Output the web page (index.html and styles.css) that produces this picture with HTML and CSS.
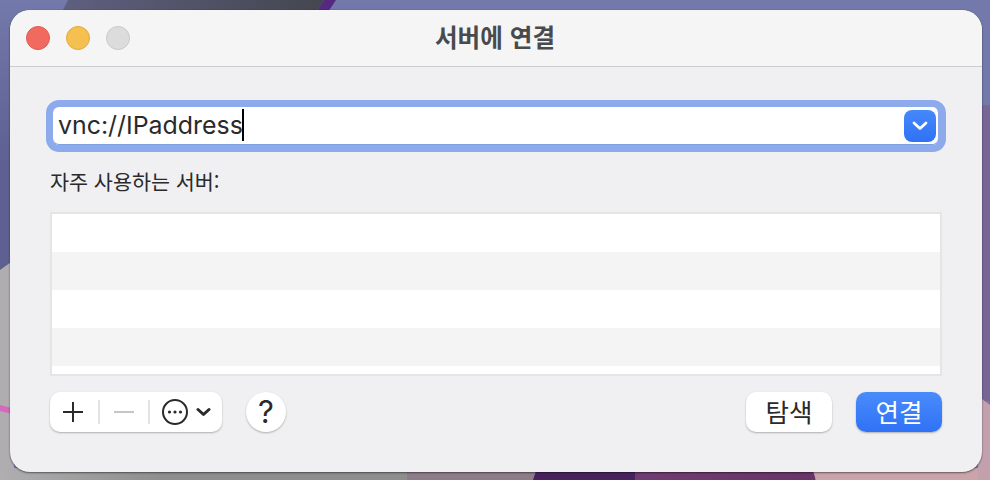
FILE: index.html
```html
<!DOCTYPE html>
<html lang="ko">
<head>
<meta charset="utf-8">
<title>서버에 연결</title>
<link rel="stylesheet" href="styles.css">
</head>
<body>
<svg class="wallpaper" viewBox="0 0 990 480" aria-hidden="true">
  <defs>
    <linearGradient id="blue" x1="0" y1="0" x2="0" y2="1"><stop offset="0" stop-color="#7379aa"/><stop offset="0.55" stop-color="#5d6090"/></linearGradient>
    <linearGradient id="dark" x1="0" y1="0" x2="1" y2="0"><stop offset="0" stop-color="#5f5f80"/><stop offset="1" stop-color="#44464f"/></linearGradient>
    <linearGradient id="gray" x1="0" y1="0" x2="1" y2="0"><stop offset="0" stop-color="#b0aeb0"/><stop offset="0.4" stop-color="#8e8e8e"/></linearGradient>
    <linearGradient id="plum" x1="0" y1="0" x2="1" y2="0"><stop offset="0" stop-color="#6f3d72"/><stop offset="1" stop-color="#6a3568"/></linearGradient>
  </defs>
  <rect width="990" height="480" fill="#7379aa"/>
  <rect width="400" height="300" fill="url(#blue)"/>
  <polygon points="400,0 990,0 990,105 400,105" fill="#7379aa"/>
  <polygon points="68,0 324,0 316,12 62,12" fill="url(#dark)"/>
  <polygon points="324,0 336,0 328,12 316,12" fill="#54297f"/>
  <polygon points="0,270 14,260 14,480 0,480" fill="#afadaf"/>
  <polygon points="0,405 12,408 12,414 0,411" fill="#d668bd"/>
  <rect x="0" y="468" width="410" height="12" fill="url(#gray)"/>
  <rect x="407" y="468" width="128" height="12" fill="#8d7d88"/>
  <polygon points="537,468 640,468 640,480 533,480" fill="#47225f"/>
  <rect x="635" y="468" width="180" height="12" fill="url(#plum)"/>
  <polygon points="812,468 990,468 990,480 816,480" fill="#c9a5ab"/>
  <rect x="978" y="105" width="12" height="296" fill="#786796"/>
  <polygon points="978,396 990,405 990,480 978,480" fill="#c2a1ad"/>
</svg>
<main class="window">
  <header class="titlebar">
    <div class="lights">
      <span class="light light-close"></span>
      <span class="light light-min"></span>
      <span class="light light-zoom"></span>
    </div>
    <h1 class="title">서버에 연결</h1>
  </header>
  <section class="content">
    <div class="field">
      <div class="field-text">vnc://IPaddress<span class="caret"></span></div>
      <button class="combo">
        <svg width="16" height="10" viewBox="0 0 16 10"><path d="M2 2l6 5.500L14 2" fill="none" stroke="#fff" stroke-width="2.800" stroke-linecap="round" stroke-linejoin="round"/></svg>
      </button>
    </div>
    <div class="label">자주 사용하는 서버:</div>
    <div class="list">
      <div class="row"></div>
      <div class="row row-alt"></div>
      <div class="row"></div>
      <div class="row row-alt"></div>
      <div class="row row-last"></div>
    </div>
    <div class="actions">
      <div class="toolbar">
        <span class="tool tool-plus">
          <svg width="22" height="22" viewBox="0 0 22 22"><path d="M11 1v20M1 11h20" fill="none" stroke="#2a2a2c" stroke-width="2"/></svg>
        </span>
        <span class="sep"></span>
        <span class="tool tool-minus">
          <svg width="22" height="22" viewBox="0 0 22 22"><path d="M1 11h20" fill="none" stroke="#c6c6c8" stroke-width="2"/></svg>
        </span>
        <span class="sep"></span>
        <span class="tool tool-more">
          <svg width="26" height="26" viewBox="0 0 26 26"><circle cx="13" cy="13" r="12" fill="none" stroke="#2a2a2c" stroke-width="2"/><circle cx="7.500" cy="13" r="1.600" fill="#2a2a2c"/><circle cx="13" cy="13" r="1.600" fill="#2a2a2c"/><circle cx="18.500" cy="13" r="1.600" fill="#2a2a2c"/></svg>
          <svg width="15" height="10" viewBox="0 0 15 10"><path d="M2 2.500l5.500 5L13 2.500" fill="none" stroke="#2a2a2c" stroke-width="3" stroke-linecap="round" stroke-linejoin="round"/></svg>
        </span>
      </div>
      <button class="help">?</button>
      <div class="spacer"></div>
      <button class="btn">탐색</button>
      <button class="btn btn-primary">연결</button>
    </div>
  </section>
</main>
</body>
</html>
```
FILE: styles.css
```css
* { box-sizing: border-box; }
html, body { margin: 0; padding: 0; }
body {
  width: 990px;
  height: 480px;
  padding: 10px 8px 8px 10px;
  overflow: hidden;
  position: relative;
  font-family: "Noto Sans CJK KR", "Inter", "Liberation Sans", sans-serif;
  color: #2a2a2c;
}
.wallpaper { position: absolute; left: 0; top: 0; width: 990px; height: 480px; }
.window {
  position: relative;
  width: 972px;
  height: 462px;
  background: #f0f0f2;
  border-radius: 20px;
  overflow: hidden;
  box-shadow: 0 1px 2px rgba(0,0,0,.45), 0 0 1px rgba(0,0,0,.4);
}
.titlebar {
  height: 57px;
  background: #f5f5f6;
  border-bottom: 1px solid #cdcdcf;
  display: flex;
  align-items: center;
  padding: 0 0 1px 16px;
  position: relative;
}
.lights { display: flex; gap: 16px; }
.light { width: 24px; height: 24px; border-radius: 50%; border: 1px solid; }
.light-close { background: #f06a60; border-color: #de5a50; }
.light-min { background: #f6c050; border-color: #e2aa40; }
.light-zoom { background: #dcdcdd; border-color: #c8c8ca; }
.title {
  position: absolute;
  left: -2px;
  right: 0;
  top: 10px;
  margin: 0;
  text-align: center;
  font-size: 24.600px;
  line-height: 32px;
  font-weight: 700;
  color: #4a4a4c;
}
.content { padding: 33px 40px 0 40px; }
.field {
  margin: 0 -4px;
  height: 52px;
  width: 900px;
  border-radius: 13px;
  background: #fff;
  border: 7px solid #8dabec;
  border-right-width: 8px;
  box-shadow: inset 0 -1px 0 #7f9fe2;
  display: flex;
  align-items: center;
  justify-content: space-between;
  padding: 0 2px 0 5px;
}
.field-text {
  font-family: "Inter", "Liberation Sans", sans-serif;
  font-size: 24.900px;
  line-height: 36px;
  display: flex;
  align-items: center;
  position: relative;
  top: -1px;
  color: #2a2a2c;
}
.caret { width: 2px; height: 32px; background: #000; margin-left: -1px; }
.combo {
  width: 32px;
  height: 32px;
  border: 0;
  padding: 0;
  border-radius: 8px;
  background: linear-gradient(#4588fb, #2f72f5);
  display: flex;
  align-items: center;
  justify-content: center;
}
.label { margin-top: 15px; font-size: 20.700px; line-height: 28px; color: #2a2a2c; }
.list {
  margin-top: 17px;
  width: 892px;
  height: 164px;
  border: 2px solid #e5e5e6;
  background: #fff;
}
.row { height: 38px; background: #fff; }
.row-alt { background: #f3f4f3; }
.row-last { height: 8px; }
.actions { margin-top: 16px; display: flex; align-items: center; height: 40px; }
.toolbar {
  width: 172px;
  height: 40px;
  border-radius: 10px;
  background: #fff;
  box-shadow: 0 1px 2px rgba(0,0,0,.28);
  display: flex;
  align-items: center;
}
.tool { display: flex; align-items: center; justify-content: center; }
.tool-plus { width: 48px; padding-right: 3px; }
.tool-minus { width: 48px; }
.tool-more { gap: 8px; padding-left: 12px; }
.sep { width: 2px; height: 24px; background: #e4e4e5; }
.help {
  margin-left: 24px;
  width: 40px;
  height: 40px;
  border: 0;
  padding: 0;
  border-radius: 50%;
  background: #fff;
  box-shadow: 0 1px 2px rgba(0,0,0,.28);
  font-family: "Inter", "Liberation Sans", sans-serif;
  font-size: 31px;
  font-weight: 400;
  line-height: 40px;
  color: #2a2a2c;
}
.spacer { flex: 1; }
.btn {
  width: 86px;
  height: 40px;
  border: 0;
  padding: 0 0 3px;
  border-radius: 10px;
  background: #fff;
  box-shadow: 0 1px 2px rgba(0,0,0,.28);
  font-family: "Noto Sans CJK KR", sans-serif;
  font-size: 25.500px;
  color: #2a2a2c;
}
.btn-primary {
  margin-left: 24px;
  background: linear-gradient(#4a8bfb, #2f72f5);
  color: #fff;
}
```
